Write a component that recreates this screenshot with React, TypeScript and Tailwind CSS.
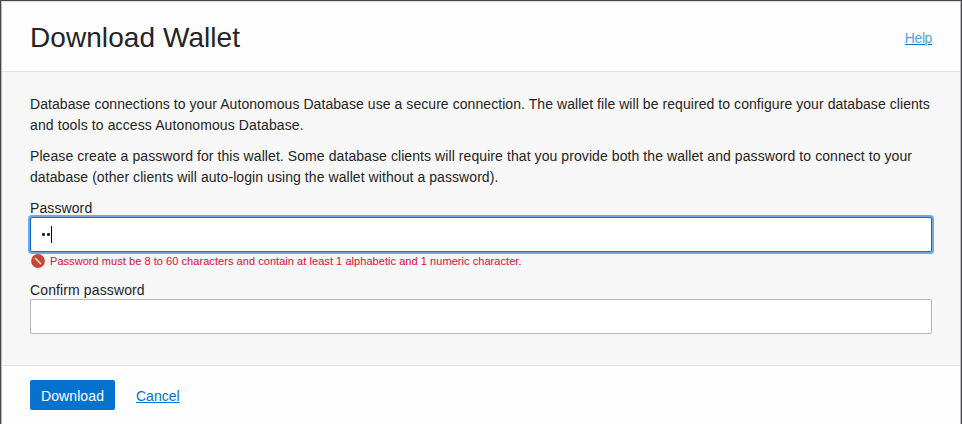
function ErrorIcon() {
  return (
    <svg className="size-[14px] shrink-0" viewBox="0 0 14 14" aria-hidden="true">
      <circle cx="7" cy="7" r="6.9" fill="#c74634" />
      <path d="M4 4L10 10" stroke="#f6e2df" strokeWidth="1.5" />
    </svg>
  );
}

export default function App() {
  return (
    <div className="h-[424px] w-[962px] overflow-hidden border-x border-t border-[#48484b] font-['Liberation_Sans',Arial,sans-serif] text-[14px] text-[#242424]">
      <div className="flex h-[423px] flex-col border-x border-t border-[#b9b9bc] border-t-[#dcdcdc] bg-[#f7f7f7]">
        <header className="flex h-[70px] shrink-0 items-center justify-between border-b border-[#e3e3e3] bg-[#fdfdfd] px-7">
          <h1 className="pt-[3px] text-[28px] leading-8 tracking-[0.07px] whitespace-nowrap">Download Wallet</h1>
          <a href="#help" className="pt-1 tracking-[-0.4px] text-[#55a3dc] underline decoration-[#0572ce] decoration-1 underline-offset-1">Help</a>
        </header>
        <main className="h-[293px] shrink-0 px-7 pt-[22px]">
          <p className="leading-[21px] whitespace-nowrap">
            <span className="block tracking-[0.064px]">Database connections to your Autonomous Database use a secure connection. The wallet file will be required to configure your database clients</span>
            <span className="block tracking-[0.11px]">and tools to access Autonomous Database.</span>
          </p>
          <p className="mt-[10px] leading-[21px] whitespace-nowrap">
            <span className="block tracking-[0.08px]">Please create a password for this wallet. Some database clients will require that you provide both the wallet and password to connect to your</span>
            <span className="block tracking-[0.07px]">database (other clients will auto-login using the wallet without a password).</span>
          </p>
          <div className="mt-[11px] h-[18px] leading-[18px] tracking-[0.1px]">Password</div>
          <div className="flex h-[35px] items-center rounded-[2px] border border-[#0572ce] bg-white pl-[11px] ring-2 ring-[#70a7df]">
            <span className="mr-[2px] size-[3px] rounded-[1px] bg-[#242424]" />
            <span className="mr-[1px] size-[3px] rounded-[1px] bg-[#242424]" />
            <span className="h-[17px] w-px bg-black" />
          </div>
          <div className="mt-[2px] flex h-[14px] items-center gap-[5px] pl-[1px]">
            <ErrorIcon />
            <span className="text-[11px] tracking-[0.053px] whitespace-nowrap text-[#de0a36]">Password must be 8 to 60 characters and contain at least 1 alphabetic and 1 numeric character.</span>
          </div>
          <div className="mt-[13px] h-[18px] leading-[18px] tracking-[0.12px]">Confirm password</div>
          <div className="h-[35px] rounded-[2px] border border-[#b5b5ba] bg-white" />
        </main>
        <footer className="flex flex-1 items-start border-t border-[#e3e3e3] bg-[#fdfdfd] px-7 pt-[14px]">
          <button className="h-[30px] w-[85px] rounded-[2px] bg-[#0572ce] pt-[2px] tracking-[0.1px] text-white">Download</button>
          <a href="#cancel" className="ml-[21px] pt-[7px] leading-[18px] text-[#0572ce] underline decoration-1 underline-offset-1">Cancel</a>
        </footer>
      </div>
    </div>
  );
}
